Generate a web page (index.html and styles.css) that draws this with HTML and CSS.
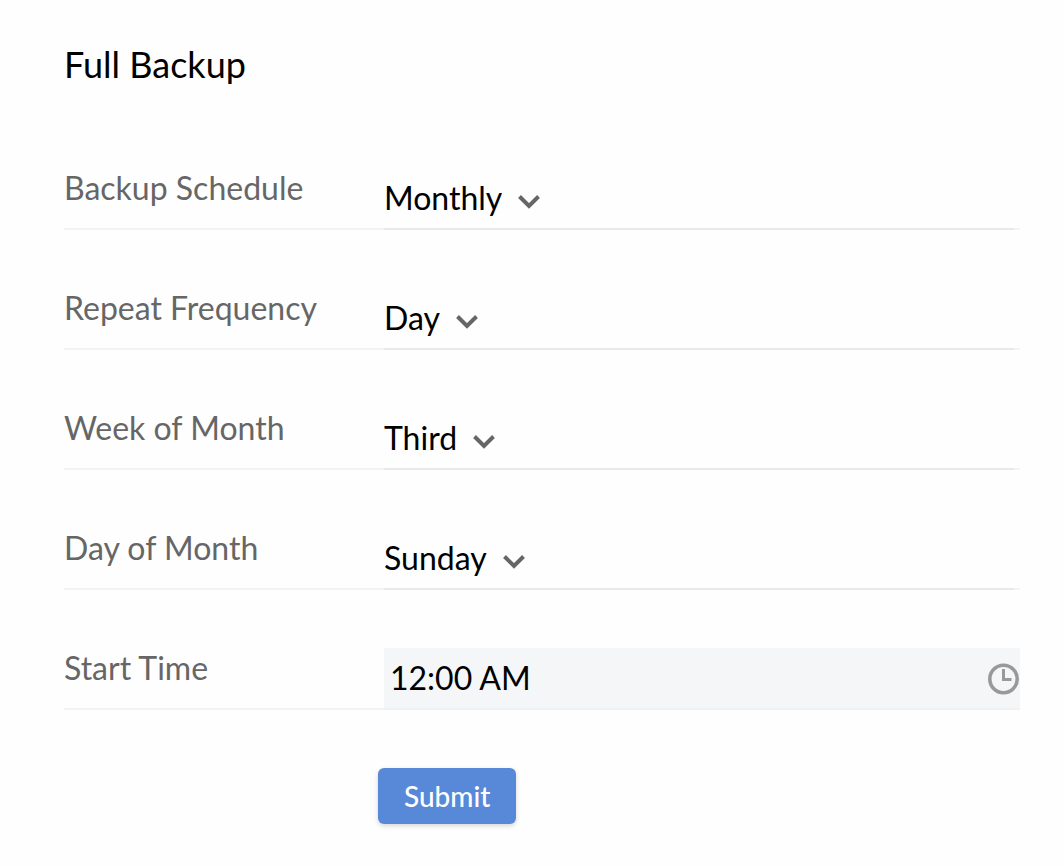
FILE: index.html
```html
<!DOCTYPE html>
<html lang="en">
<head>
  <meta charset="UTF-8">
  <meta name="viewport" content="width=device-width, initial-scale=1.0">
  <title>Full Backup</title>
  <link rel="stylesheet" href="styles.css">
</head>
<body>
  <form class="backup-form">
    <h1 class="title">Full Backup</h1>

    <div class="row">
      <label class="label" for="schedule">Backup Schedule</label>
      <div class="field">
        <select id="schedule" class="select">
          <option>Daily</option>
          <option>Weekly</option>
          <option selected>Monthly</option>
        </select>
        <svg class="chevron" viewBox="0 0 24 16" aria-hidden="true"><path d="M2.500 2.500 12 12l9.500-9.500"/></svg>
      </div>
    </div>

    <div class="row">
      <label class="label" for="frequency">Repeat Frequency</label>
      <div class="field">
        <select id="frequency" class="select">
          <option>Date</option>
          <option selected>Day</option>
        </select>
        <svg class="chevron" viewBox="0 0 24 16" aria-hidden="true"><path d="M2.500 2.500 12 12l9.500-9.500"/></svg>
      </div>
    </div>

    <div class="row">
      <label class="label" for="week">Week of Month</label>
      <div class="field">
        <select id="week" class="select">
          <option>First</option>
          <option>Second</option>
          <option selected>Third</option>
          <option>Fourth</option>
        </select>
        <svg class="chevron" viewBox="0 0 24 16" aria-hidden="true"><path d="M2.500 2.500 12 12l9.500-9.500"/></svg>
      </div>
    </div>

    <div class="row">
      <label class="label" for="day">Day of Month</label>
      <div class="field">
        <select id="day" class="select">
          <option selected>Sunday</option>
          <option>Monday</option>
          <option>Tuesday</option>
          <option>Wednesday</option>
          <option>Thursday</option>
          <option>Friday</option>
          <option>Saturday</option>
        </select>
        <svg class="chevron" viewBox="0 0 24 16" aria-hidden="true"><path d="M2.500 2.500 12 12l9.500-9.500"/></svg>
      </div>
    </div>

    <div class="row">
      <label class="label" for="time">Start Time</label>
      <div class="field field-time">
        <input id="time" class="time" type="text" value="12:00 AM">
        <svg class="clock" viewBox="0 0 32 32" aria-hidden="true">
          <circle cx="15.500" cy="16" r="13.700"/>
          <path d="M15.500 6v10.500h8"/>
        </svg>
      </div>
    </div>

    <button class="submit" type="submit">Submit</button>
  </form>
</body>
</html>
```
FILE: styles.css
```css
body {
  margin: 0;
  background: #fefefe;
  color: #000;
  font-family: Lato, sans-serif;
}
.backup-form {
  padding: 42px 44px 42px 64px;
}
.title {
  margin: 0 0 82px;
  font-size: 36px;
  font-weight: 400;
  line-height: 44px;
}
.row {
  display: grid;
  grid-template-columns: 320px 1fr;
  height: 60px;
  margin-bottom: 58px;
  border-bottom: 2px solid #f3f3f3;
}
.label {
  color: #666;
  font-size: 32px;
  line-height: 40px;
}
.field {
  display: flex;
  align-items: center;
  margin: 0 6px -2px 0;
  border-bottom: 2px solid #e9e9e9;
}
.select {
  appearance: none;
  field-sizing: content;
  margin: 0;
  padding: 0;
  border: 0;
  background: none;
  color: #000;
  font: 32px/40px Lato, sans-serif;
}
.chevron {
  width: 24px;
  height: 16px;
  margin: 8px 0 0 15px;
  fill: none;
  stroke: #666;
  stroke-width: 4;
}

/* start time */
.field-time {
  margin-right: 0;
  background: #f5f6f8;
  border-bottom-color: #f0f1f3;
}
.time {
  flex: 1;
  min-width: 0;
  padding: 0 6px;
  border: 0;
  background: none;
  color: #000;
  font: 32px/40px Lato, sans-serif;
}
.clock {
  width: 32px;
  height: 32px;
  margin-top: 2px;
  fill: none;
  stroke: #999;
  stroke-width: 3.6;
}
.clock path {
  stroke-width: 3;
}

.submit {
  display: block;
  margin-left: 314px;
  padding: 0 26px;
  border: 0;
  border-radius: 6px;
  background: #5889d8;
  box-shadow: 0 2px 5px rgba(0, 0, 0, 0.16);
  color: #fff;
  font: 500 28px/56px Lato, sans-serif;
}
```
